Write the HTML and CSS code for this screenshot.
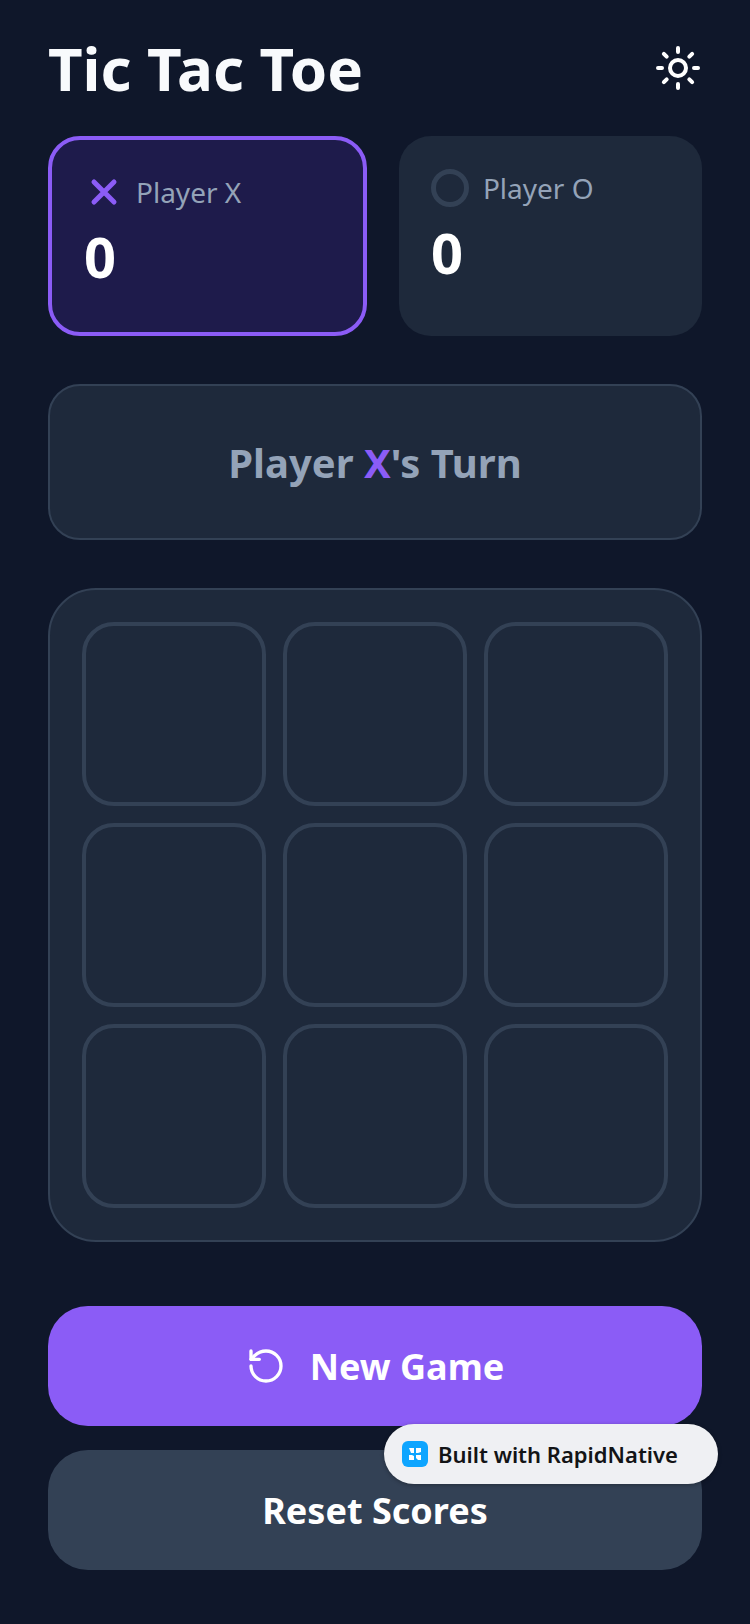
FILE: index.html
```html
<!DOCTYPE html>
<html lang="en">
<head>
  <meta charset="UTF-8">
  <meta name="viewport" content="width=device-width, initial-scale=1.0">
  <title>Tic Tac Toe</title>
  <link rel="stylesheet" href="styles.css">
</head>
<body>
  <div class="app">
    <header class="top-bar">
      <h1 class="title">Tic Tac Toe</h1>
      <button class="theme-btn" aria-label="Toggle theme">
        <svg width="48" height="48" viewBox="0 0 24 24" fill="none" stroke="#fff" stroke-width="2" stroke-linecap="round">
          <circle cx="12" cy="12" r="4"/>
          <path d="M12 2v2M12 20v2M4.93 4.93l1.41 1.41M17.66 17.66l1.41 1.41M2 12h2M20 12h2M6.34 17.66l-1.41 1.41M19.07 4.93l-1.41 1.41"/>
        </svg>
      </button>
    </header>

    <section class="scores">
      <div class="score-card score-card-active">
        <div class="score-label">
          <svg class="mark" width="40" height="40" viewBox="0 0 24 24" fill="none" stroke="#8b5cf6" stroke-width="3" stroke-linecap="round">
            <path d="M18 6L6 18M6 6l12 12"/>
          </svg>
          <span>Player X</span>
        </div>
        <div class="score-value">0</div>
      </div>
      <div class="score-card">
        <div class="score-label">
          <span class="ring"></span>
          <span>Player O</span>
        </div>
        <div class="score-value">0</div>
      </div>
    </section>

    <section class="status">
      <span>Player <em>X</em>'s Turn</span>
    </section>

    <section class="board">
      <div class="cell"></div>
      <div class="cell"></div>
      <div class="cell"></div>
      <div class="cell"></div>
      <div class="cell"></div>
      <div class="cell"></div>
      <div class="cell"></div>
      <div class="cell"></div>
      <div class="cell"></div>
    </section>

    <section class="actions">
      <button class="btn btn-primary">
        <svg width="40" height="40" viewBox="0 0 24 24" fill="none" stroke="#fff" stroke-width="2" stroke-linecap="round" stroke-linejoin="round">
          <path d="M3 12a9 9 0 1 0 9-9 9.75 9.75 0 0 0-6.74 2.74L3 8"/>
          <path d="M3 3v5h5"/>
        </svg>
        <span>New Game</span>
      </button>
      <button class="btn btn-secondary"><span>Reset Scores</span></button>
    </section>
  </div>

  <a class="badge" href="#">
    <svg class="badge-logo" width="26" height="26" viewBox="0 0 26 26">
      <rect width="26" height="26" rx="6" fill="#0ea5ff"/>
      <path d="M7 7h5v5H9zM14 7h5v4l-3 1h-2zM7 14h3l2 1v4H7zM14 14h5v5h-3l-2-2z" fill="#fff"/>
    </svg>
    <span>Built with RapidNative</span>
  </a>
</body>
</html>
```

FILE: styles.css
```css
html, body {
  margin: 0;
  padding: 0;
}
body {
  position: relative;
  width: 750px;
  height: 1624px;
  overflow: hidden;
  background: #0f172a;
  font-family: "Noto Sans", "Open Sans", sans-serif;
  color: #fff;
}

.app {
  display: flex;
  flex-direction: column;
  padding: 24px 48px 0;
}

.top-bar {
  display: flex;
  align-items: center;
  justify-content: space-between;
  height: 88px;
  margin-bottom: 24px;
}
.title {
  margin: 0;
  font-size: 60px;
  font-weight: 700;
  line-height: 88px;
  color: #f8fafc;
}
.theme-btn {
  display: flex;
  padding: 0;
  border: 0;
  background: none;
}

.scores {
  display: flex;
  gap: 32px;
  margin-bottom: 48px;
}
.score-card {
  box-sizing: border-box;
  flex: 306 1 0;
  height: 200px;
  padding: 32px;
  background: #1e293b;
  border-radius: 32px;
}
.score-card-active {
  flex: 316 1 0;
  padding: 32px;
  background: #1e1b4b;
  border: 4px solid #8b5cf6;
}
.score-label {
  display: flex;
  align-items: center;
  gap: 12px;
  height: 40px;
  font-size: 28px;
  color: #94a3b8;
}
.mark {
  flex: none;
}
.ring {
  box-sizing: border-box;
  width: 38px;
  height: 38px;
  margin-right: 2px;
  border: 5px solid #334155;
  border-radius: 50%;
}
.score-value {
  margin-top: 8px;
  font-size: 56px;
  font-weight: 700;
  line-height: 72px;
}

.status {
  box-sizing: border-box;
  display: flex;
  align-items: center;
  justify-content: center;
  height: 156px;
  margin-bottom: 48px;
  background: #1e293b;
  border: 2px solid #334155;
  border-radius: 32px;
  font-size: 40px;
  font-weight: 700;
  color: #94a3b8;
}
.status em {
  font-style: normal;
  color: #8b5cf6;
}

.board {
  box-sizing: border-box;
  display: grid;
  grid-template-columns: repeat(3, 184px);
  grid-auto-rows: 184px;
  justify-content: space-between;
  row-gap: 17px;
  height: 654px;
  padding: 32px;
  margin-bottom: 64px;
  background: #1e293b;
  border: 2px solid #334155;
  border-radius: 48px;
}
.cell {
  box-sizing: border-box;
  border: 4px solid #334155;
  border-radius: 32px;
}

.actions {
  display: flex;
  flex-direction: column;
  gap: 24px;
}
.btn {
  display: flex;
  align-items: center;
  justify-content: center;
  gap: 24px;
  height: 120px;
  padding: 0;
  border: 0;
  border-radius: 40px;
  font-family: inherit;
  font-size: 36px;
  font-weight: 700;
  color: #fff;
}
.btn-primary {
  background: #8b5cf6;
}
.btn-secondary {
  background: #334155;
}

/* floating badge sits over the buttons */
.badge {
  position: absolute;
  left: 384px;
  top: 1424px;
  box-sizing: border-box;
  display: flex;
  align-items: center;
  gap: 10px;
  width: 334px;
  height: 60px;
  padding-left: 18px;
  background: #eff0f3;
  border-radius: 30px;
  box-shadow: 0 1px 4px rgba(0, 0, 0, 0.3);
  font-size: 22px;
  font-weight: 600;
  color: #131416;
  text-decoration: none;
}
.badge-logo {
  flex: none;
}
```
